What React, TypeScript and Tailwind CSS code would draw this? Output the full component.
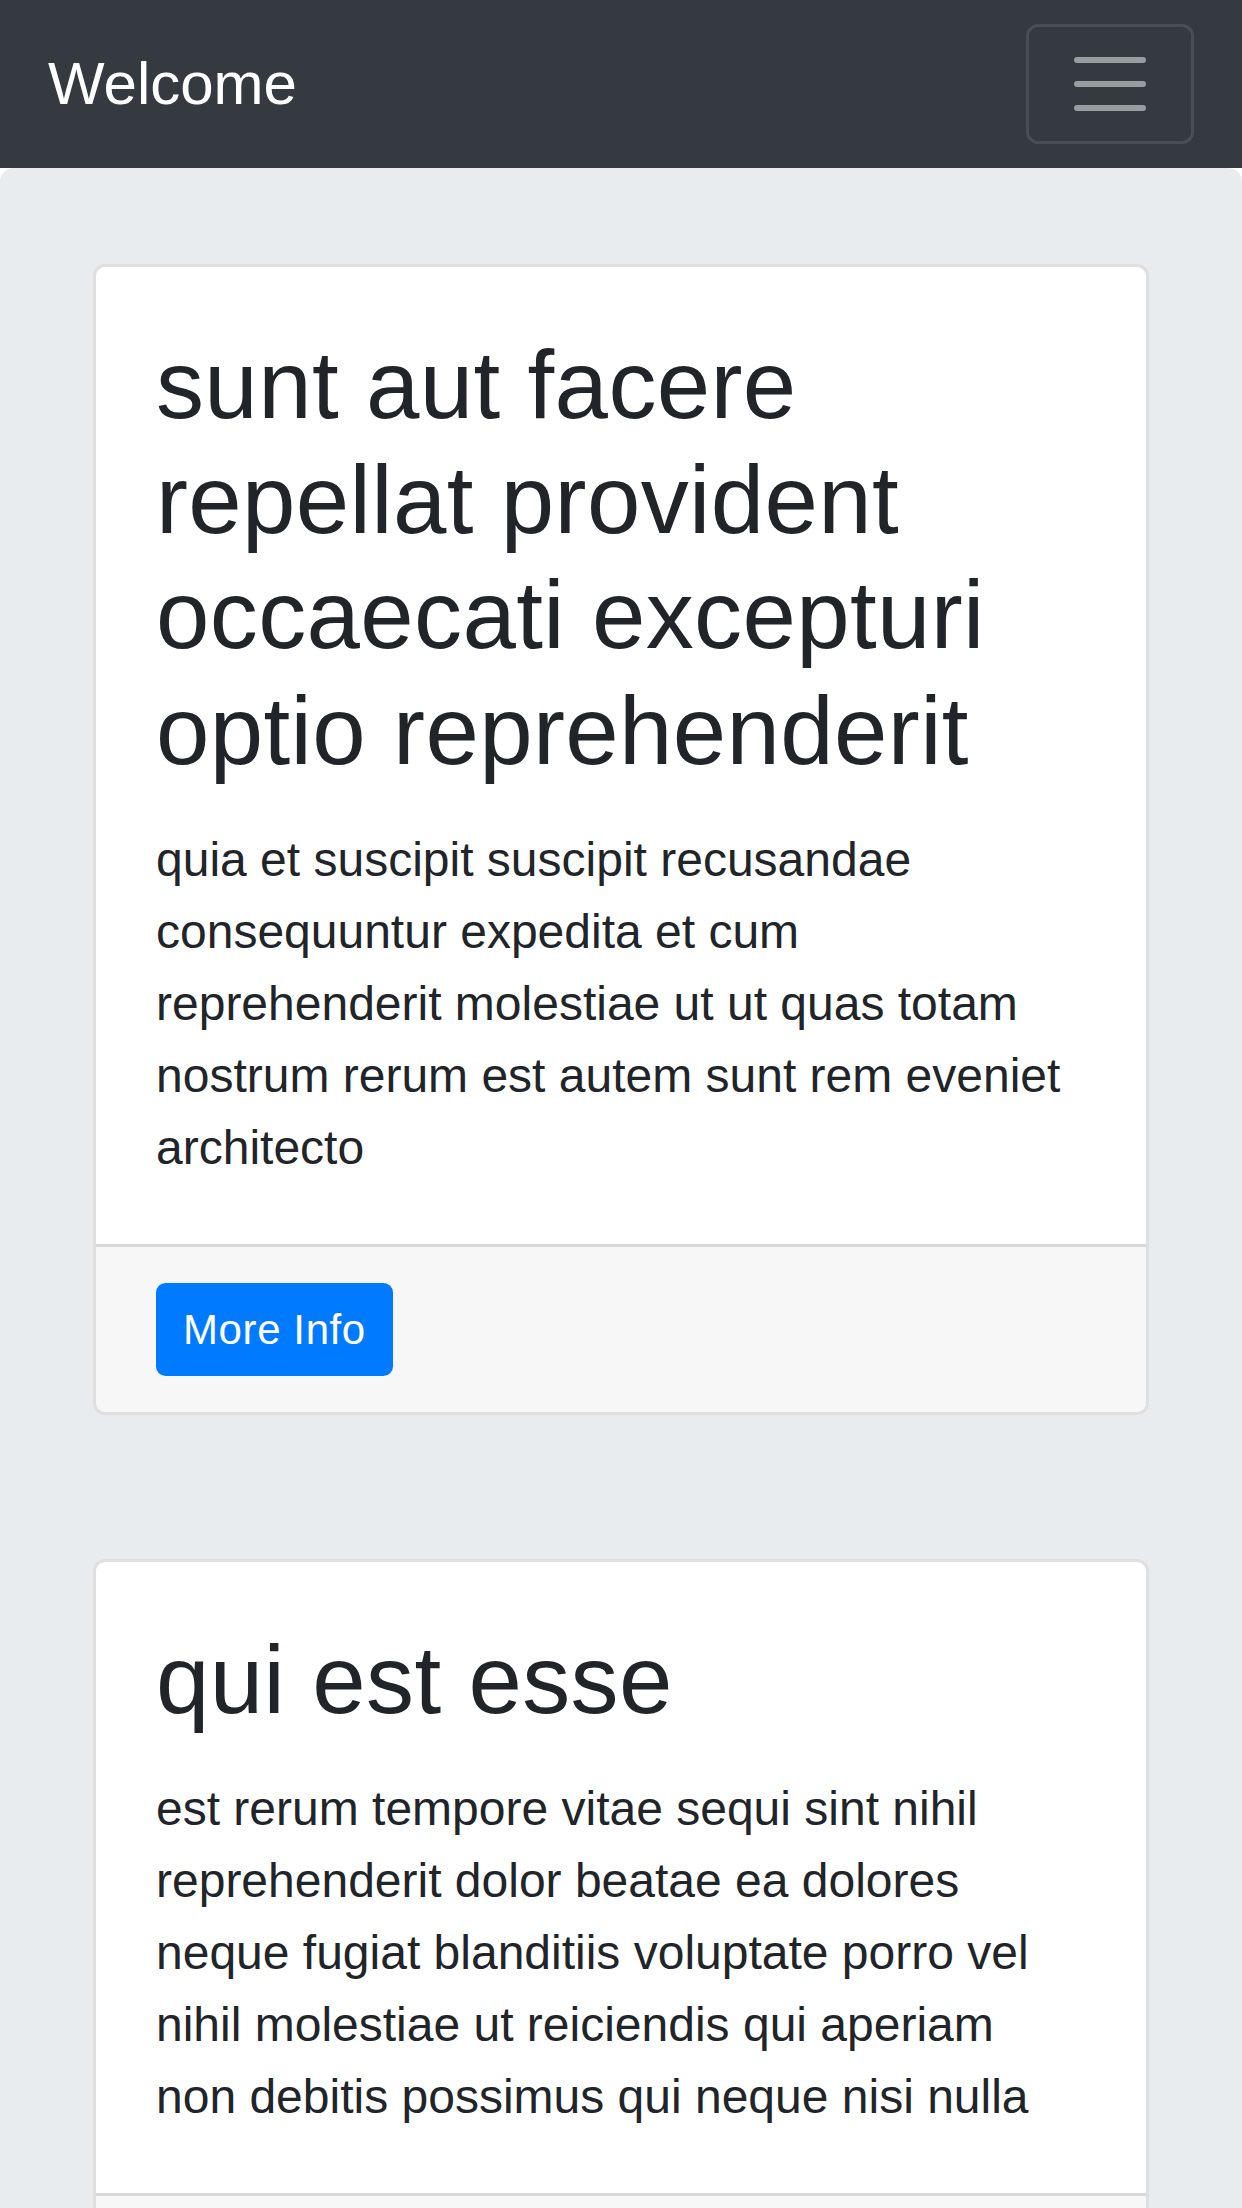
import React from "react";

const posts = [
  {
    title: "sunt aut facere repellat provident occaecati excepturi optio reprehenderit",
    body: "quia et suscipit suscipit recusandae consequuntur expedita et cum reprehenderit molestiae ut ut quas totam nostrum rerum est autem sunt rem eveniet architecto",
  },
  {
    title: "qui est esse",
    body: "est rerum tempore vitae sequi sint nihil reprehenderit dolor beatae ea dolores neque fugiat blanditiis voluptate porro vel nihil molestiae ut reiciendis qui aperiam non debitis possimus qui neque nisi nulla",
  },
  {
    title: "ea molestias quasi exercitationem repellat qui ipsa sit aut",
    body: "et iusto sed quo iure voluptatem occaecati omnis eligendi aut ad voluptatem doloribus vel accusantium quis pariatur molestiae porro eius odio et labore et velit aut",
  },
];

export default function App() {
  return (
    <div className="min-h-screen bg-white font-['Liberation_Sans',Arial,sans-serif] text-[#212529]">
      <nav className="flex h-[168px] items-center justify-between bg-[#343a40] px-[48px]">
        <span className="text-[60px] leading-[1.5] text-white">Welcome</span>
        <button className="flex h-[120px] w-[168px] items-center justify-center rounded-[12px] border-[3px] border-[rgba(255,255,255,0.1)]">
          <svg width="90" height="90" viewBox="0 0 30 30">
            <path
              stroke="rgba(255,255,255,0.5)"
              strokeLinecap="round"
              strokeMiterlimit="10"
              strokeWidth="2"
              d="M4 7h22M4 15h22M4 23h22"
            />
          </svg>
        </button>
      </nav>
      <div className="rounded-[14px] bg-[#e9ecef] px-[93px] py-[96px]">
        {posts.map((p, i) => (
          <div
            key={i}
            className="mb-[144px] overflow-hidden rounded-[12px] border-[3px] border-[rgba(0,0,0,0.125)] bg-white"
          >
            <div className="p-[60px]">
              <h2 className="mb-[36px] text-[96px] font-normal leading-[1.2] tracking-[0.37px]">{p.title}</h2>
              <p className="text-[48px] leading-[72px]">{p.body}</p>
            </div>
            <div className="border-t-[3px] border-[rgba(0,0,0,0.125)] bg-[rgba(0,0,0,0.03)] px-[60px] py-[36px]">
              <button className="rounded-[9.6px] border-[3px] border-[#007bff] bg-[#007bff] px-[24px] py-[12px] text-[42px] leading-[1.5] tracking-[0.6px] text-white">
                More Info
              </button>
            </div>
          </div>
        ))}
      </div>
    </div>
  );
}
